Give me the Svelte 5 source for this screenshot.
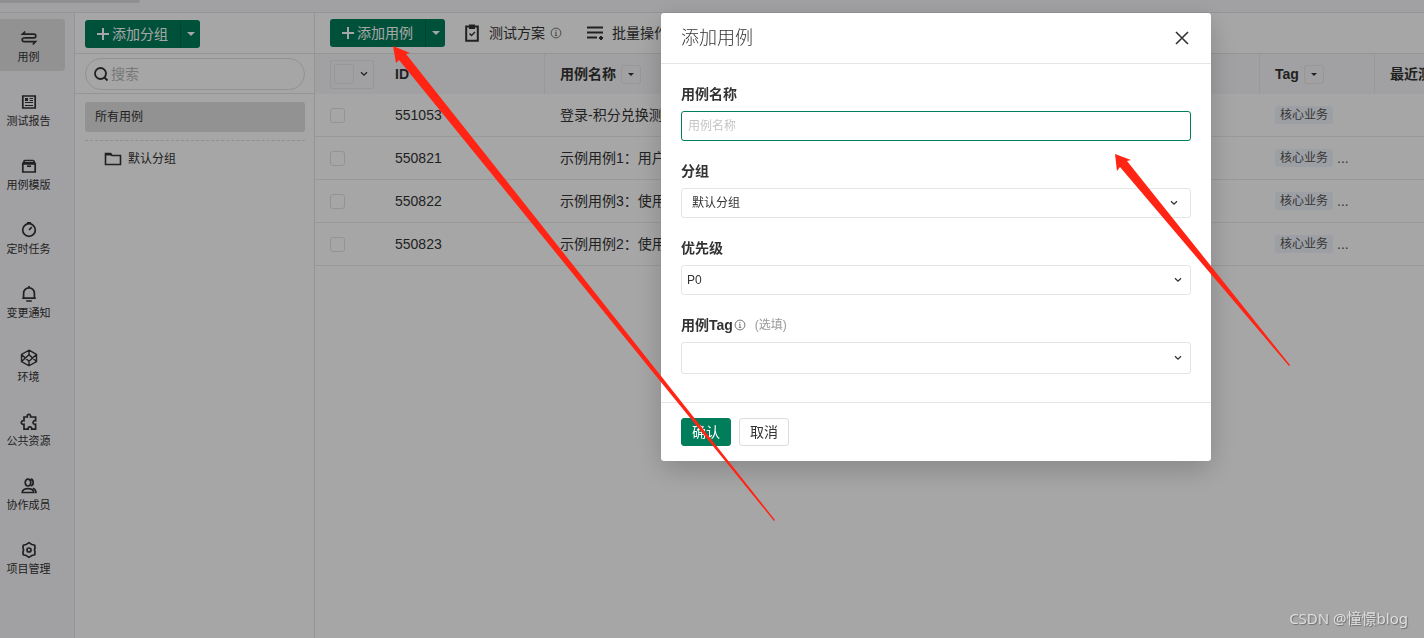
<script>
  const menu = [
    { icon: 'cases', label: '用例', active: true },
    { icon: 'report', label: '测试报告' },
    { icon: 'template', label: '用例模版' },
    { icon: 'timer', label: '定时任务' },
    { icon: 'bell', label: '变更通知' },
    { icon: 'env', label: '环境' },
    { icon: 'puzzle', label: '公共资源' },
    { icon: 'members', label: '协作成员' },
    { icon: 'gear', label: '项目管理' }
  ];
  const rows = [
    { id: '551053', name: '登录-积分兑换测', more: false },
    { id: '550821', name: '示例用例1：用户', more: true },
    { id: '550822', name: '示例用例3：使用', more: true },
    { id: '550823', name: '示例用例2：使用', more: true }
  ];
</script>

{#snippet icon(name)}
  <svg class="icon" viewBox="0 0 18 18" width="18" height="18" aria-hidden="true">
    {#if name === 'cases'}
      <path d="M5.200 2.500 2.500 5.200H14a1.800 1.800 0 0 1 0 3.600H5M12.800 15.500l2.700-2.900H4a1.800 1.800 0 0 1 0-3.600H13" />
    {:else if name === 'report'}
      <path d="M2.800 3h12.400v12H2.800z" />
      <path class="thin" d="M5 9.500h8M5 12.500h8M9.500 5.500H13M9.500 7.500H13" />
      <path class="fill" d="M5 5h3v3H5z" />
    {:else if name === 'template'}
      <path d="M2.800 6.800h12.400V15H2.800zM4.500 3.500h9M2.800 6.800 4.500 3.500M15.200 6.800 13.500 3.500" />
      <path d="M7 9.200h4" />
      <path class="fill" d="M3 5h12v2H3z" />
    {:else if name === 'timer'}
      <circle cx="9" cy="9" r="6.300" /><path d="M7 1.800h4M9 9l2.800-2.800" />
    {:else if name === 'bell'}
      <path d="M3.600 13.200V8.200a5.400 5.400 0 0 1 10.800 0v5M2.200 13.200h13.600M9 1v2M6.200 16h5.600" />
    {:else if name === 'env'}
      <path class="medium" d="M9 1.200 16.500 5.500v7L9 16.800l-7.500-4.300v-7zM9 1.200v4.500M9 12.300v4.500M1.500 5.500 9 12.300l7.500-6.800M1.500 12.500 9 5.700l7.500 6.800" />
    {:else if name === 'puzzle'}
      <path d="M4 4h3.200c-.8-3.400 4.200-3.400 3.400 0h5v3.700c-3.400-.7-3.400 4.300 0 3.600v4.900h-3.900c.6-3.200-4.200-3.200-3.600 0H4v-4.900c-3.600.8-3.600-4.400 0-3.600z" />
    {:else if name === 'members'}
      <path d="M8 2.200c3.700 0 3.700 6.800 0 6.800s-3.700-6.800 0-6.800zM2.200 15.500c0-5.200 11.600-5.200 11.600 0zM10.800 2.200c3.200.3 3.200 6.400 0 6.700M12.800 11.300c2.300.6 3.200 2.200 3.200 4.900" />
    {:else if name === 'gear'}
      <path stroke-linejoin="round" d="M7.500 2.600 9 1.600l1.500 1 1.400.9 2.900.8.200 2.900-.6 1.800.6 1.800-.2 2.900-2.900.8-1.400.9-1.500 1-1.500-1-1.400-.9-2.900-.8L3 10.800 3.600 9 3 7.200l.2-2.900 2.900-.8z" />
      <circle cx="9" cy="9" r="2" />
    {/if}
  </svg>
{/snippet}

{#snippet chevron()}
  <svg class="chevron" viewBox="0 0 8 6" width="8" height="6" aria-hidden="true"><path d="M1 1.200 4 4.200 7 1.200" /></svg>
{/snippet}

{#snippet info()}
  <svg class="info" viewBox="0 0 12 12" width="12" height="12" aria-hidden="true"><circle cx="6" cy="6" r="4.900" /><path d="M6 3v1.200M5 5.300h1v3M4.800 8.400h2.400" /></svg>
{/snippet}

{#snippet splitButton(label)}
  <div class="split">
    <button class="split-main" type="button">
      <svg viewBox="0 0 12 12" width="12" height="12" aria-hidden="true"><path d="M6 0v12M0 6h12" /></svg>
      {label}
    </button>
    <button class="split-more" type="button" aria-label="更多"><span class="caret"></span></button>
  </div>
{/snippet}

<div class="page">
  <header class="top"><div class="tab"></div></header>
  <div class="columns">
    <nav class="sidebar">
      {#each menu as item}
        <a href="#{item.icon}" class:active={item.active}>
          {@render icon(item.icon)}
          <span>{item.label}</span>
        </a>
      {/each}
    </nav>

    <aside class="groups">
      <div class="groups-head">{@render splitButton('添加分组')}</div>
      <div class="search-row">
        <label class="search">
          <svg viewBox="0 0 16 16" width="16" height="16" aria-hidden="true"><circle cx="7.500" cy="7.500" r="5.500" /><path d="m11.500 11.500 3 3" /></svg>
          <input type="search" placeholder="搜索" aria-label="搜索" />
        </label>
      </div>
      <div class="tree">
        <a class="all" href="#all">所有用例</a>
        <a class="folder" href="#default">
          <svg viewBox="0 0 18 14" width="18" height="14" aria-hidden="true"><path d="M1.500 12.500v-11h5l1.500 2h8.500v9z" /><path class="fill" d="M1 1h6l1.500 2.500H1z" /></svg>
          默认分组
        </a>
      </div>
    </aside>

    <main>
      <div class="toolbar">
        {@render splitButton('添加用例')}
        <button class="tool plan" type="button">
          <svg viewBox="0 0 14 18" width="14" height="18" aria-hidden="true"><path d="M1.200 2.500h11.600v14.300H1.200z" /><path class="medium" d="M4.500 9.500 6.500 11.500l3.500-3.500" /><path class="fill" d="M4 .500h6V5H4z" /></svg>
          <span>测试方案</span>
          {@render info()}
        </button>
        <button class="tool batch" type="button">
          <svg viewBox="0 0 18 14" width="18" height="14" aria-hidden="true"><path d="M1 1.500h16M1 6.500h16M1 11.500h10M13 12h4M15 10v4" /></svg>
          <span>批量操作</span>
        </button>
      </div>
      <table>
        <colgroup><col class="c-check" /><col class="c-id" /><col /><col class="c-tag" /><col class="c-last" /></colgroup>
        <thead>
          <tr>
            <th><div class="check-all"><input type="checkbox" aria-label="全选" />{@render chevron()}</div></th>
            <th>ID</th>
            <th class="line"><div class="head">用例名称<button type="button" aria-label="筛选用例名称"><span class="caret"></span></button></div></th>
            <th class="line"><div class="head">Tag<button type="button" aria-label="筛选Tag"><span class="caret"></span></button></div></th>
            <th class="line">最近测</th>
          </tr>
        </thead>
        <tbody>
          {#each rows as row}
            <tr>
              <td><input type="checkbox" aria-label={row.id} /></td>
              <td>{row.id}</td>
              <td>{row.name}</td>
              <td><div class="tags"><span class="tag">核心业务</span>{#if row.more}<span>...</span>{/if}</div></td>
              <td></td>
            </tr>
          {/each}
        </tbody>
      </table>
    </main>
  </div>
</div>

<div class="overlay">
  <form class="modal" aria-labelledby="dialog-title">
    <div class="modal-head">
      <h2 id="dialog-title">添加用例</h2>
      <button type="button" class="close" aria-label="关闭">
        <svg viewBox="0 0 14 14" width="14" height="14" aria-hidden="true"><path d="m1 1 12 12M13 1 1 13" /></svg>
      </button>
    </div>
    <div class="modal-body">
      <div class="field">
        <label for="case-name">用例名称</label>
        <input id="case-name" type="text" placeholder="用例名称" />
      </div>
      <div class="field">
        <label for="case-group">分组</label>
        <div class="select group">
          <select id="case-group"><option>默认分组</option></select>
          {@render chevron()}
        </div>
      </div>
      <div class="field">
        <label for="case-level">优先级</label>
        <div class="select">
          <select id="case-level"><option>P0</option></select>
          {@render chevron()}
        </div>
      </div>
      <div class="field">
        <label for="case-tag">用例Tag{@render info()}<small>(选填)</small></label>
        <div class="select tall">
          <select id="case-tag"><option></option></select>
          {@render chevron()}
        </div>
      </div>
    </div>
    <div class="modal-foot">
      <button type="submit" class="primary">确认</button>
      <button type="button">取消</button>
    </div>
  </form>
</div>

<svg class="arrows" aria-hidden="true">
  <path d="M393 46 410 53 406 54 775 520 774 521 399 60 396 63z" />
  <path d="M1115 154 1131 160 1127 161 1290 365 1289 366 1120 167 1117 171z" />
</svg>

<div class="watermark">CSDN @憧憬blog</div>

<style>
  :global(body) {
    overflow: hidden;
    font-family: "Liberation Sans", "Noto Sans CJK SC", sans-serif;
    font-size: 14px;
    line-height: 20px;
    color: #333;
  }
  button, input, select {
    box-sizing: border-box;
    margin: 0;
    padding: 0;
    border: 0;
    background: none;
    font: inherit;
    color: inherit;
    outline: none;
  }
  a { color: inherit; text-decoration: none; }
  svg { flex: none; fill: none; stroke: currentColor; }
  .fill { fill: currentColor; stroke: none; }

  .page {
    display: flex;
    flex-direction: column;
    height: 100vh;
    background: #fff;
  }
  .top {
    height: 12px;
    background: #f7f7fa;
    border-bottom: 1px solid #e5e5e6;
  }
  .tab {
    width: 140px;
    height: 3px;
    background: #dcdcdc;
    border-radius: 0 0 4px 0;
  }
  .columns { display: flex; flex: 1; min-height: 0; }

  .sidebar {
    display: flex;
    flex-direction: column;
    gap: 12px;
    box-sizing: border-box;
    width: 75px;
    flex: none;
    padding: 6px 9px 0 0;
    background: #f7f7fa;
    border-right: 1px solid #e5e5e6;
  }
  .sidebar a {
    display: flex;
    flex-direction: column;
    align-items: center;
    gap: 1px;
    box-sizing: border-box;
    height: 52px;
    padding: 10px 8px 0 0;
    border-radius: 0 4px 4px 0;
    font-size: 11px;
    line-height: 18px;
  }
  .sidebar a.active { background: #e0e0e0; }
  .icon { stroke-width: 1.7; }
  .thin { stroke-width: 1; }
  .medium { stroke-width: 1.4; }

  .groups {
    box-sizing: border-box;
    width: 240px;
    flex: none;
    border-right: 1px solid #e5e5e6;
  }
  .groups-head {
    box-sizing: border-box;
    height: 41px;
    padding: 7px 10px 0;
    border-bottom: 1px solid #e5e5e6;
  }
  .split { display: inline-flex; height: 28px; color: #fff; flex: none; vertical-align: top; }
  .split-main {
    display: flex;
    align-items: center;
    gap: 3px;
    padding: 0 12px;
    background: #007d5a;
    border-radius: 3px 0 0 3px;
  }
  .split-main svg { stroke-width: 2; }
  .split-more {
    display: grid;
    place-items: center;
    width: 20px;
    background: #007d5a;
    border-left: 1px solid #006a4b;
    border-radius: 0 3px 3px 0;
  }
  .caret {
    border: 4px solid transparent;
    border-top-color: currentColor;
    border-bottom: 0;
  }
  .search-row { padding: 4px 9px 3px 10px; border-bottom: 1px solid #e5e5e6; }
  .search {
    display: flex;
    align-items: center;
    gap: 2px;
    box-sizing: border-box;
    height: 32px;
    padding: 0 7px;
    border: 1px solid #e0e0e1;
    border-radius: 16px;
  }
  .search svg { stroke-width: 1.8; }
  .search input { flex: 1; min-width: 0; appearance: none; }
  .search input::placeholder { color: #b8b8b8; }
  .tree { padding: 8px 9px 8px 10px; font-size: 12px; }
  .all {
    display: block;
    padding: 5px 10px;
    background: #e0e0e0;
    border-radius: 3px;
  }
  .folder {
    display: flex;
    align-items: center;
    gap: 6px;
    height: 35px;
    margin-top: 8px;
    padding-left: 19px;
    border-top: 1px dashed #dcdcdc;
  }
  .folder svg { stroke-width: 1.6; }

  main { flex: 1; min-width: 0; overflow: hidden; }
  .toolbar {
    display: flex;
    align-items: center;
    height: 40px;
    padding-left: 15px;
    border-bottom: 1px solid #e5e5e6;
    white-space: nowrap;
  }
  .tool { display: flex; align-items: center; }
  .tool svg { stroke-width: 2; }
  .tool .medium { stroke-width: 1.4; }
  .plan { gap: 10px; margin-left: 20px; }
  .plan .info { margin-left: -5px; }
  .batch { gap: 8px; margin-left: 24px; }
  .info, .tool .info { stroke-width: 1; color: #777; }

  table { width: 100%; table-layout: fixed; border-collapse: separate; border-spacing: 0; }
  .c-check { width: 65px; }
  .c-id { width: 164px; }
  .c-tag { width: 115px; }
  .c-last { width: 50px; }
  th, td {
    box-sizing: border-box;
    padding: 0 0 0 15px;
    text-align: left;
    white-space: nowrap;
    overflow: hidden;
  }
  th { height: 40px; background: #f7f7fa; }
  th.line { border-left: 1px solid #ececed; }
  td { height: 43px; border-bottom: 1px solid #ececed; }
  td:nth-child(3), td:nth-child(4) { padding-left: 16px; }
  input[type="checkbox"] {
    display: block;
    appearance: none;
    width: 15px;
    height: 15px;
    border: 1px solid #e2e2e3;
    border-radius: 3px;
  }
  .check-all {
    display: flex;
    align-items: center;
    gap: 6px;
    box-sizing: border-box;
    width: 44px;
    height: 29px;
    padding-left: 3px;
    border: 1px solid #e8e8e9;
    border-radius: 3px;
  }
  .check-all input[type="checkbox"] { width: 20px; height: 20px; border-color: #e8e8e9; }
  .chevron { stroke-width: 1.3; }
  .head { display: flex; align-items: center; gap: 5px; }
  .head button {
    display: grid;
    place-items: center;
    width: 20px;
    height: 19px;
    border: 1px solid #e8e8e9;
    border-radius: 3px;
  }
  .head .caret { border-width: 3px 3px 0; }
  .tags { display: flex; align-items: center; gap: 4px; color: #555; }
  .tag {
    padding: 0 5px;
    font-size: 12px;
    line-height: 18px;
    background: #f0f4fb;
    border-radius: 3px;
  }

  .overlay {
    position: fixed;
    inset: 0;
    display: flex;
    justify-content: flex-end;
    align-items: flex-start;
    padding: 13px 213px 0 0;
    background: rgba(0, 0, 0, 0.35);
  }
  .modal {
    width: 550px;
    background: #fff;
    border-radius: 3px;
    box-shadow: 0 8px 28px rgba(0, 0, 0, 0.2);
  }
  .modal-head {
    display: flex;
    align-items: center;
    justify-content: space-between;
    height: 50px;
    padding: 0 20px;
    border-bottom: 1px solid #e5e5e6;
  }
  h2 { margin: 0; font-size: 18px; font-weight: 300; color: #333; }
  .close { display: grid; place-items: center; width: 18px; height: 18px; }
  .close svg { stroke-width: 1.6; }
  .modal-body {
    display: flex;
    flex-direction: column;
    gap: 20px;
    padding: 20px 20px 28px;
  }
  .field { display: flex; flex-direction: column; gap: 7px; }
  .field label { display: flex; align-items: center; font-weight: 700; }
  .field small { margin-left: 9px; font-size: 12px; font-weight: 400; color: #999; }
  .field label .info { margin-left: 1px; }
  .field > input, .select select {
    width: 100%;
    height: 30px;
    border: 1px solid #e5e5e6;
    border-radius: 3px;
    padding: 0 5px;
    font-size: 12px;
    background: #fff;
  }
  .field > input { border-color: #007d5a; padding: 0 6px; }
  .field > input::placeholder { color: #c4c4c4; }
  .select { position: relative; display: flex; }
  .select select { appearance: none; }
  .select.group select { padding: 0 10px; }
  .select.tall select { height: 32px; }
  .select .chevron {
    position: absolute;
    top: 50%;
    right: 9px;
    margin-top: -3px;
    pointer-events: none;
  }
  .select.group .chevron { right: 13px; }
  .modal-foot {
    display: flex;
    gap: 8px;
    padding: 15px 20px;
    border-top: 1px solid #e5e5e6;
  }
  .modal-foot button {
    width: 50px;
    height: 28px;
    border: 1px solid #dcdcdc;
    border-radius: 3px;
  }
  .modal-foot .primary { background: #007d5a; border-color: #007d5a; color: #fff; }

  .arrows {
    position: fixed;
    inset: 0;
    width: 100%;
    height: 100%;
    pointer-events: none;
  }
  .arrows path { fill: #ff2414; stroke: none; }
  .watermark {
    position: fixed;
    right: 16px;
    bottom: 10px;
    font-family: "Noto Sans", "Noto Sans CJK SC", sans-serif;
    font-size: 15px;
    color: #dedede;
    text-shadow: 1px 1px 1px #707070;
  }
</style>
